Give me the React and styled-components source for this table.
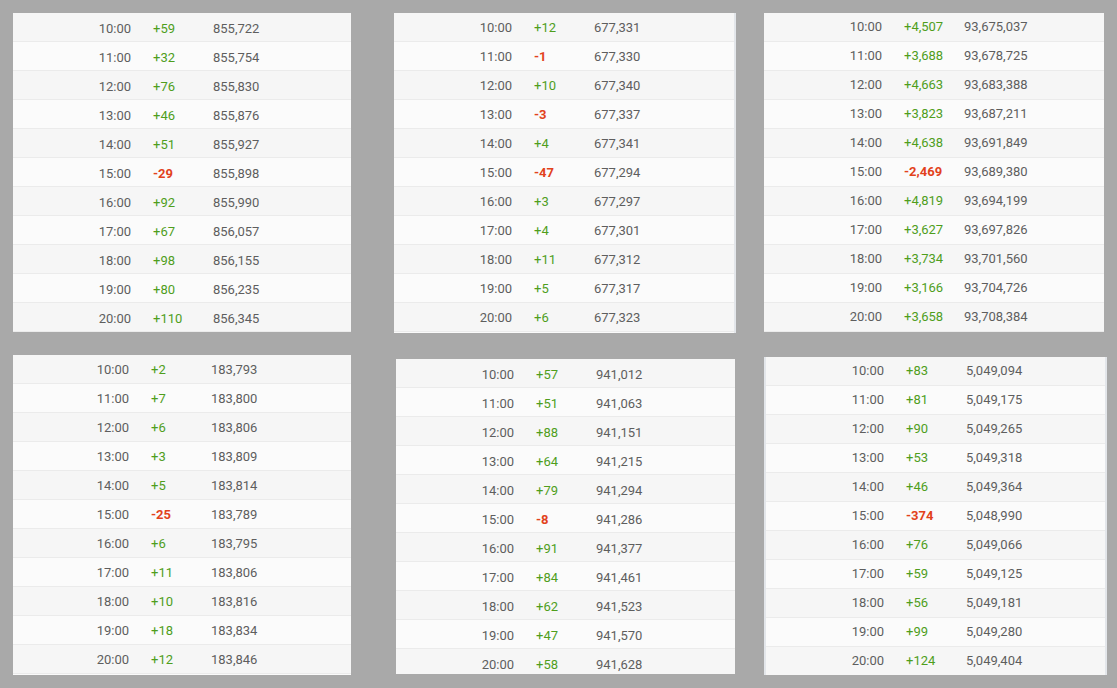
import React from 'react';
import styled, { createGlobalStyle } from 'styled-components';

const GlobalStyle = createGlobalStyle`
    html, body {
        margin: 0;
        padding: 0;
        background: #a9a9a9;
    }
    body {
        font-family: Roboto, 'Liberation Sans', sans-serif;
    }
`;

const Board = styled.div`
    display: grid;
    grid-template-columns: 381px 370px 1fr;
    grid-template-rows: 320px 320px;
    row-gap: 22px;
    padding: 13px 0 0 13px;
    width: 1117px;
    height: 688px;
    box-sizing: border-box;
    overflow: hidden;
`;

const Panel = styled.div`
    align-self: start;
    width: ${(p) => p.$w}px;
    height: ${(p) => p.$h}px;
    margin-left: ${(p) => p.$dx || 0}px;
    margin-top: ${(p) => p.$dy || 0}px;
    box-sizing: border-box;
    overflow: hidden;
    background: #fafafa;
    border-left: ${(p) => (p.$edgeLeft ? '2px solid #e3e6ea' : 'none')};
    border-right: ${(p) => (p.$edgeRight ? '2px solid #e3e6ea' : 'none')};
`;

const Row = styled.div`
    display: grid;
    grid-template-columns: ${(p) => 118 + (p.$shift || 0)}px 82px 1fr;
    align-items: center;
    height: 29px;
    padding-top: ${(p) => (p.$nudge > 0 ? p.$nudge * 2 : 0)}px;
    padding-bottom: ${(p) => (p.$nudge < 0 ? -p.$nudge * 2 : 0)}px;
    box-sizing: border-box;
    border-bottom: 1px solid #ebebeb;
    background: ${(p) => (p.$odd ? '#fbfbfb' : '#f6f6f6')};
    font-size: 13px;
    color: #5e5e5e;
`;

const Time = styled.span`
    text-align: right;
`;

const Delta = styled.span`
    padding-left: 22px;
    color: ${(p) => (p.$neg ? '#e2421c' : '#4f9e1c')};
    font-weight: ${(p) => (p.$neg ? 700 : 400)};
`;

const Total = styled.span`
    color: #5e5e5e;
`;

const hours = ['10:00', '11:00', '12:00', '13:00', '14:00', '15:00', '16:00', '17:00', '18:00', '19:00', '20:00'];

const panels = [
    {
        w: 338, h: 319, nudge: 1,
        deltas: ['+59', '+32', '+76', '+46', '+51', '-29', '+92', '+67', '+98', '+80', '+110'],
        totals: ['855,722', '855,754', '855,830', '855,876', '855,927', '855,898', '855,990', '856,057', '856,155', '856,235', '856,345'],
    },
    {
        w: 342, h: 320, right: true,
        deltas: ['+12', '-1', '+10', '-3', '+4', '-47', '+3', '+4', '+11', '+5', '+6'],
        totals: ['677,331', '677,330', '677,340', '677,337', '677,341', '677,294', '677,297', '677,301', '677,312', '677,317', '677,323'],
    },
    {
        w: 340, h: 319, nudge: -1,
        deltas: ['+4,507', '+3,688', '+4,663', '+3,823', '+4,638', '-2,469', '+4,819', '+3,627', '+3,734', '+3,166', '+3,658'],
        totals: ['93,675,037', '93,678,725', '93,683,388', '93,687,211', '93,691,849', '93,689,380', '93,694,199', '93,697,826', '93,701,560', '93,704,726', '93,708,384'],
    },
    {
        w: 338, h: 320, shift: -2,
        deltas: ['+2', '+7', '+6', '+3', '+5', '-25', '+6', '+11', '+10', '+18', '+12'],
        totals: ['183,793', '183,800', '183,806', '183,809', '183,814', '183,789', '183,795', '183,806', '183,816', '183,834', '183,846'],
    },
    {
        w: 339, h: 315, dx: 2, dy: 4, nudge: 1,
        deltas: ['+57', '+51', '+88', '+64', '+79', '-8', '+91', '+84', '+62', '+47', '+58'],
        totals: ['941,012', '941,063', '941,151', '941,215', '941,294', '941,286', '941,377', '941,461', '941,523', '941,570', '941,628'],
    },
    {
        w: 343, h: 318, dy: 2, left: true, right: true, nudge: -1,
        deltas: ['+83', '+81', '+90', '+53', '+46', '-374', '+76', '+59', '+56', '+99', '+124'],
        totals: ['5,049,094', '5,049,175', '5,049,265', '5,049,318', '5,049,364', '5,048,990', '5,049,066', '5,049,125', '5,049,181', '5,049,280', '5,049,404'],
    },
];

const App = () => {
    return (
        <>
            <GlobalStyle />
            <Board>
                {panels.map((p, i) => (
                    <Panel
                        key={i}
                        $w={p.w}
                        $h={p.h}
                        $dx={p.dx}
                        $dy={p.dy}
                        $edgeLeft={p.left}
                        $edgeRight={p.right}
                    >
                        {hours.map((h, j) => (
                            <Row
                                key={h}
                                $odd={j % 2 === 1}
                                $nudge={p.nudge || 0}
                                $shift={p.shift}
                            >
                                <Time>{h}</Time>
                                <Delta $neg={p.deltas[j].startsWith('-')}>{p.deltas[j]}</Delta>
                                <Total>{p.totals[j]}</Total>
                            </Row>
                        ))}
                    </Panel>
                ))}
            </Board>
        </>
    );
};

export default App;
